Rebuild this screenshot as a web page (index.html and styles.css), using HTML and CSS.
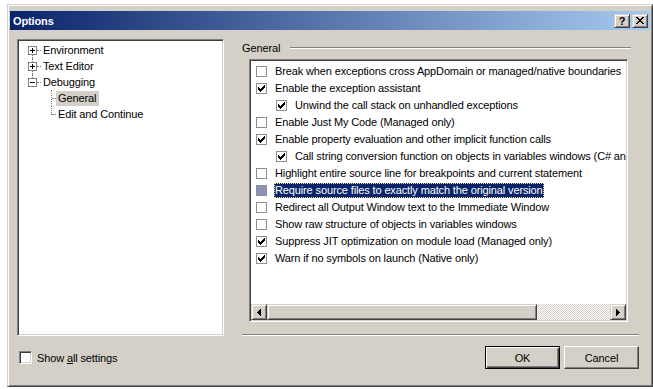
FILE: index.html
```html
<!DOCTYPE html>
<html lang="en">
<head>
  <meta charset="UTF-8">
  <title>Options</title>
  <link rel="stylesheet" href="styles.css">
</head>
<body>
  <div class="window">
    <!-- Barra de título -->
    <div class="titlebar">
      <span class="title">Options</span>
      <div class="cap-buttons">
        <span class="cap-btn help">?</span>
        <span class="cap-btn">
          <svg width="8" height="7" viewBox="0 0 8 7" shape-rendering="crispEdges"><path d="M0 0h2v1H0z M6 0h2v1H6z M1 1h2v1H1z M5 1h2v1H5z M2 2h4v1H2z M3 3h2v1H3z M2 4h4v1H2z M1 5h2v1H1z M5 5h2v1H5z M0 6h2v1H0z M6 6h2v1H6z"/></svg>
        </span>
      </div>
    </div>

    <div class="client">
      <div class="main">
        <!-- Árbol de categorías -->
        <div class="tree">
          <div class="node">
            <span class="exp-col"><i class="seg top none"></i><svg class="exp" width="9" height="9" viewBox="0 0 9 9" shape-rendering="crispEdges"><rect x="0.5" y="0.5" width="8" height="8" fill="#fff" stroke="#808080"/><path d="M2 4h5v1H2z M4 2h1v5H4z"/></svg><i class="seg bottom"></i></span>
            <i class="hline"></i>
            <span class="label">Environment</span>
          </div>
          <div class="node">
            <span class="exp-col"><i class="seg top"></i><svg class="exp" width="9" height="9" viewBox="0 0 9 9" shape-rendering="crispEdges"><rect x="0.5" y="0.5" width="8" height="8" fill="#fff" stroke="#808080"/><path d="M2 4h5v1H2z M4 2h1v5H4z"/></svg><i class="seg bottom"></i></span>
            <i class="hline"></i>
            <span class="label">Text Editor</span>
          </div>
          <div class="node">
            <span class="exp-col"><i class="seg top"></i><svg class="exp" width="9" height="9" viewBox="0 0 9 9" shape-rendering="crispEdges"><rect x="0.5" y="0.5" width="8" height="8" fill="#fff" stroke="#808080"/><path d="M2 4h5v1H2z"/></svg><i class="seg bottom none"></i></span>
            <i class="hline"></i>
            <span class="label">Debugging</span>
          </div>
          <div class="node child">
            <span class="branch"><i class="v"></i><i class="h"></i></span>
            <span class="label selected">General</span>
          </div>
          <div class="node child">
            <span class="branch last"><i class="v"></i><i class="h"></i></span>
            <span class="label">Edit and Continue</span>
          </div>
        </div>

        <!-- Página de opciones -->
        <div class="page">
          <div class="group-title">
            <span class="group-name">General</span>
            <span class="rule"></span>
          </div>
          <div class="list">
            <div class="rows">
              <div class="row"><span class="cb"></span><span class="text">Break when exceptions cross AppDomain or managed/native boundaries</span></div>
              <div class="row"><span class="cb checked"><svg width="7" height="7" viewBox="0 0 7 7" shape-rendering="crispEdges"><path d="M0 2h1v3H0z M1 3h1v3H1z M2 4h1v3H2z M3 3h1v3H3z M4 2h1v3H4z M5 1h1v3H5z M6 0h1v3H6z"/></svg></span><span class="text">Enable the exception assistant</span></div>
              <div class="row sub"><span class="cb checked"><svg width="7" height="7" viewBox="0 0 7 7" shape-rendering="crispEdges"><path d="M0 2h1v3H0z M1 3h1v3H1z M2 4h1v3H2z M3 3h1v3H3z M4 2h1v3H4z M5 1h1v3H5z M6 0h1v3H6z"/></svg></span><span class="text">Unwind the call stack on unhandled exceptions</span></div>
              <div class="row"><span class="cb"></span><span class="text">Enable Just My Code (Managed only)</span></div>
              <div class="row"><span class="cb checked"><svg width="7" height="7" viewBox="0 0 7 7" shape-rendering="crispEdges"><path d="M0 2h1v3H0z M1 3h1v3H1z M2 4h1v3H2z M3 3h1v3H3z M4 2h1v3H4z M5 1h1v3H5z M6 0h1v3H6z"/></svg></span><span class="text">Enable property evaluation and other implicit function calls</span></div>
              <div class="row sub"><span class="cb checked"><svg width="7" height="7" viewBox="0 0 7 7" shape-rendering="crispEdges"><path d="M0 2h1v3H0z M1 3h1v3H1z M2 4h1v3H2z M3 3h1v3H3z M4 2h1v3H4z M5 1h1v3H5z M6 0h1v3H6z"/></svg></span><span class="text">Call string conversion function on objects in variables windows (C# and Visual Basic only)</span></div>
              <div class="row"><span class="cb"></span><span class="text">Highlight entire source line for breakpoints and current statement</span></div>
              <div class="row"><span class="cb highlighted"></span><span class="text selected">Require source files to exactly match the original version</span></div>
              <div class="row"><span class="cb"></span><span class="text">Redirect all Output Window text to the Immediate Window</span></div>
              <div class="row"><span class="cb"></span><span class="text">Show raw structure of objects in variables windows</span></div>
              <div class="row"><span class="cb checked"><svg width="7" height="7" viewBox="0 0 7 7" shape-rendering="crispEdges"><path d="M0 2h1v3H0z M1 3h1v3H1z M2 4h1v3H2z M3 3h1v3H3z M4 2h1v3H4z M5 1h1v3H5z M6 0h1v3H6z"/></svg></span><span class="text">Suppress JIT optimization on module load (Managed only)</span></div>
              <div class="row"><span class="cb checked"><svg width="7" height="7" viewBox="0 0 7 7" shape-rendering="crispEdges"><path d="M0 2h1v3H0z M1 3h1v3H1z M2 4h1v3H2z M3 3h1v3H3z M4 2h1v3H4z M5 1h1v3H5z M6 0h1v3H6z"/></svg></span><span class="text">Warn if no symbols on launch (Native only)</span></div>
            </div>
            <!-- Barra de desplazamiento horizontal -->
            <div class="hscroll">
              <span class="sb-btn"><svg width="4" height="7" viewBox="0 0 4 7" shape-rendering="crispEdges"><path d="M0 3h1v1H0z M1 2h1v3H1z M2 1h1v5H2z M3 0h1v7H3z"/></svg></span>
              <span class="sb-thumb"></span>
              <span class="sb-track"></span>
              <span class="sb-btn"><svg width="4" height="7" viewBox="0 0 4 7" shape-rendering="crispEdges"><path d="M0 0h1v7H0z M1 1h1v5H1z M2 2h1v3H2z M3 3h1v1H3z"/></svg></span>
            </div>
          </div>
          <div class="separator"></div>
        </div>
      </div>

      <div class="footer">
        <label class="show-all"><span class="box3d"></span><span>Show <u>a</u>ll settings</span></label>
        <div class="buttons">
          <button class="btn default">OK</button>
          <button class="btn">Cancel</button>
        </div>
      </div>
    </div>
  </div>
</body>
</html>
```

FILE: styles.css
```css
* {
  box-sizing: border-box;
}
body {
  margin: 0;
  background: #fff;
  font-family: "Liberation Sans", Arial, sans-serif;
  font-size: 11px;
  letter-spacing: -0.13px;
  color: #000;
}
.window {
  width: 646px;
  height: 383px;
  margin: 4px 0 0 7px;
  background: #d4d0c8;
  border: 1px solid;
  border-color: #d4d0c8 #404040 #404040 #d4d0c8;
  box-shadow: inset 1px 1px #fff, inset -1px -1px #808080;
  padding: 6px 2px 2px 2px;
  display: flex;
  flex-direction: column;
}
.titlebar {
  height: 19px;
  flex: none;
  display: flex;
  align-items: center;
  padding-left: 3px;
  background: linear-gradient(to right, #0a246a, #a6caf0);
  color: #fff;
  font-weight: bold;
}
.cap-buttons {
  margin-left: auto;
  display: flex;
  gap: 2px;
  padding-right: 2px;
}
.cap-btn {
  width: 16px;
  height: 14px;
  display: flex;
  align-items: center;
  justify-content: center;
  background: #d4d0c8;
  border: 1px solid;
  border-color: #d4d0c8 #404040 #404040 #d4d0c8;
  box-shadow: inset 1px 1px #fff, inset -1px -1px #808080;
  color: #000;
}
.cap-btn.help {
  font-size: 11px;
  font-weight: bold;
  line-height: 1;
  padding-top: 1px;
}
.client {
  flex: 1;
  display: flex;
  flex-direction: column;
  padding: 9px 11px 0 7px;
}
.main {
  display: flex;
  gap: 18px;
}

/* árbol */
.tree {
  flex: none;
  width: 207px;
  height: 297px;
  background: #fff;
  border: 1px solid;
  border-color: #808080 #fff #fff #808080;
  box-shadow: inset 1px 1px #404040, inset -1px -1px #d4d0c8;
  padding: 2px 0 0 1px;
}
.node {
  height: 16px;
  display: flex;
  align-items: flex-start;
  padding-left: 9px;
  white-space: nowrap;
}
.exp-col {
  width: 9px;
  height: 16px;
  display: flex;
  flex-direction: column;
  align-items: center;
}
.seg {
  width: 1px;
  border-left: 1px dotted #808080;
}
.seg.top {
  height: 4px;
}
.seg.bottom {
  height: 3px;
}
.seg.none {
  border-left-color: transparent;
}
.exp {
  display: block;
  flex: none;
}
.hline {
  width: 4px;
  margin-top: 8px;
  border-top: 1px dotted #808080;
}
.label {
  margin-top: 1px;
  padding: 1px 3px 1px 2px;
  line-height: 13px;
}
.node.child {
  padding-left: 32px;
}
.branch {
  width: 5px;
  height: 16px;
  display: flex;
  align-items: flex-start;
}
.branch .v {
  width: 1px;
  height: 16px;
  border-left: 1px dotted #808080;
}
.branch.last .v {
  height: 9px;
}
.branch .h {
  width: 4px;
  margin-top: 8px;
  border-top: 1px dotted #808080;
}
.label.selected {
  background: #d4d0c8;
}

/* página */
.page {
  flex: 1;
  min-width: 0;
  display: flex;
  flex-direction: column;
}
.group-title {
  height: 16px;
  padding-top: 2px;
  display: flex;
  align-items: center;
}
.group-name {
  width: 48px;
}
.rule {
  flex: 1;
  height: 2px;
  margin-right: 8px;
  border-top: 1px solid #808080;
  border-bottom: 1px solid #fff;
}
.list {
  height: 263px;
  margin: 4px 11px 0 7px;
  background: #fff;
  border: 1px solid;
  border-color: #808080 #fff #fff #808080;
  box-shadow: inset 1px 1px #404040, inset -1px -1px #d4d0c8;
  padding: 1px;
  display: flex;
  flex-direction: column;
  overflow: hidden;
}
.rows {
  flex: 1;
  min-width: 0;
  padding-top: 2px;
  overflow: hidden;
}
.row {
  height: 17px;
  display: flex;
  align-items: center;
  padding-left: 5px;
  white-space: nowrap;
}
.row.sub {
  padding-left: 25px;
}
.cb {
  flex: none;
  width: 11px;
  height: 11px;
  border: 1px solid #8e8e8e;
  background: #fff;
  margin-right: 7px;
  display: flex;
  align-items: center;
  justify-content: center;
}
.cb svg {
  display: block;
}
.cb.highlighted {
  background: #8d93b8;
}
.text {
  padding: 1px;
  line-height: 13px;
}
.text.selected {
  background: #0a246a;
  color: #fff;
  outline: 1px dotted #f5db95;
  outline-offset: -1px;
}
.hscroll {
  height: 16px;
  flex: none;
  display: flex;
}
.sb-btn, .sb-thumb {
  flex: none;
  background: #d4d0c8;
  border: 1px solid;
  border-color: #d4d0c8 #404040 #404040 #d4d0c8;
  box-shadow: inset 1px 1px #fff, inset -1px -1px #808080;
}
.sb-btn {
  width: 16px;
  display: flex;
  align-items: center;
  justify-content: center;
}
.sb-thumb {
  width: 270px;
}
.sb-track {
  flex: 1;
  background: repeating-conic-gradient(#d4d0c8 0 25%, #fff 0 50%) 0 0 / 2px 2px;
}
.separator {
  height: 2px;
  margin-top: 12px;
  border-top: 1px solid #808080;
  border-bottom: 1px solid #fff;
}

/* pie */
.footer {
  height: 23px;
  margin-top: 10px;
  display: flex;
  align-items: center;
}
.show-all {
  display: flex;
  align-items: center;
  padding-left: 2px;
}
.box3d {
  width: 13px;
  height: 13px;
  margin-right: 5px;
  background: #fff;
  border: 1px solid;
  border-color: #808080 #fff #fff #808080;
  box-shadow: inset 1px 1px #404040, inset -1px -1px #d4d0c8;
}
.buttons {
  margin-left: auto;
  display: flex;
  gap: 4px;
}
.btn {
  width: 75px;
  height: 23px;
  padding: 0;
  font-family: inherit;
  font-size: 11px;
  letter-spacing: inherit;
  color: #000;
  background: #d4d0c8;
  border: 1px solid;
  border-color: #fff #404040 #404040 #fff;
  box-shadow: inset -1px -1px #808080, inset 1px 1px #d4d0c8;
}
.btn.default {
  border-color: #000;
  box-shadow: inset 1px 1px #fff, inset -1px -1px #404040, inset -2px -2px #808080;
}
```
